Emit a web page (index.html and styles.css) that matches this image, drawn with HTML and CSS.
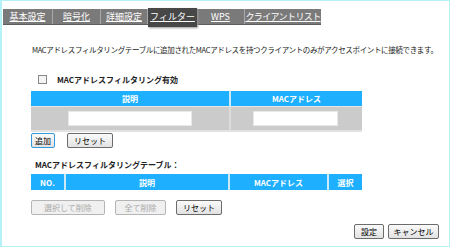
FILE: index.html
```html
<!DOCTYPE html>
<html>
<head>
    <title>フィルター</title>
    <link rel="stylesheet" href="styles.css">
</head>
<body>
<div class="frame">

    <div class="tabs">
        <a class="tab t1" href="#">基本設定</a>
        <a class="tab t2" href="#">暗号化</a>
        <a class="tab t3" href="#">詳細設定</a>
        <a class="tab t4 active" href="#">フィルター</a>
        <a class="tab t5" href="#">WPS</a>
        <a class="tab t6" href="#">クライアントリスト</a>
    </div>

    <div class="content">
        <p class="intro">MACアドレスフィルタリングテーブルに追加されたMACアドレスを持つクライアントのみがアクセスポイントに接続できます。</p>

        <label class="enable"><span class="check"></span>MACアドレスフィルタリング有効</label>

        <table class="grid add">
            <tr class="head">
                <td class="c-desc">説明</td>
                <td class="c-mac">MACアドレス</td>
            </tr>
            <tr class="entry">
                <td><input type="text" class="in-desc"></td>
                <td><input type="text" class="in-mac"></td>
            </tr>
        </table>
        <div class="btns">
            <button class="btn focus">追加</button>
            <button class="btn">リセット</button>
        </div>

        <h4>MACアドレスフィルタリングテーブル：</h4>
        <table class="grid list">
            <tr class="head">
                <td class="c-no">NO.</td>
                <td class="c-desc2">説明</td>
                <td class="c-mac2">MACアドレス</td>
                <td class="c-sel">選択</td>
            </tr>
        </table>
        <div class="btns row2">
            <button class="btn off w1" disabled>選択して削除</button>
            <button class="btn off w2" disabled>全て削除</button>
            <button class="btn">リセット</button>
        </div>
    </div>

    <div class="footer">
        <button class="btn">設定</button>
        <button class="btn wide">キャンセル</button>
    </div>

</div>
</body>
</html>
```

FILE: styles.css
```css
body {
    margin: 0;
    font-family: "Noto Sans CJK JP", "Liberation Sans", sans-serif;
    font-size: 8px;
    color: #000;
}
.frame {
    height: 245px;
    width: 447px;
    border: 1px solid #b4f2f8;
    border-left-width: 2px;
    background: #fff;
    overflow: hidden;
}
.tabs {
    display: flex;
    margin: 8px 0 0 1px;
    height: 15px;
    width: 318px;
    background: #7a7a7a;
    border-bottom: 1px solid #5e5e5e;
}
.tab {
    color: #fff;
    font-size: 9px;
    line-height: 15px;
    text-align: center;
    border-right: 1px solid #a8a8a8;
    box-sizing: border-box;
    white-space: nowrap;
}
.t1 { width: 50px; }
.t2 { width: 48px; }
.t3 { width: 47px; }
.t4 { width: 49px; }
.t5 { width: 48px; }
.t6 { width: 76px; border-right: none; letter-spacing: -0.6px; }
.tab.active {
    background: #474747;
    margin-top: -1px;
    height: 19px;
    line-height: 17px;
    border-right: none;
    box-shadow: 1px 1px 2px #999;
}
.content {
    margin-left: 29px;
}
.intro {
    margin: 19px 0 0 1px;
    font-size: 7.5px;
    letter-spacing: -0.35px;
    line-height: 12px;
    white-space: nowrap;
    color: #222;
}
.enable {
    display: flex;
    align-items: center;
    margin: 18px 0 0 7px;
    font-weight: bold;
    font-size: 8px;
    height: 10px;
    color: #222;
}
.check {
    width: 7px;
    height: 7px;
    border: 1px solid #888;
    background: #f4f4f4;
    margin-right: 10px;
}
.grid {
    border-collapse: collapse;
    width: 331px;
    margin-top: 7px;
}
.grid td {
    padding: 0;
    text-align: center;
}
.grid td + td {
    border-left: 2px solid #dcdcdc;
}
.head td {
    background: #1eafff;
    color: #fff;
    font-weight: bold;
    height: 15px;
    font-size: 8px;
    line-height: 15px;
    border-bottom: 1px solid #e6e6e6;
}
.head td + td {
    border-left: 2px solid #cde9f8;
}
.entry td {
    background: #cbcbcb;
    height: 23px;
    border-bottom: 2px solid #e2e2e2;
}
.c-desc { width: 198px; }
.in-desc, .in-mac {
    display: block;
    height: 15px;
    border: 1px solid #e8e8e8;
    background: #fff;
    box-sizing: border-box;
    padding: 0;
}
.in-desc { width: 124px; margin-left: 37px; }
.in-mac { width: 85px; margin-left: 22px; }
.btns {
    display: flex;
    gap: 12px;
    margin-top: 1px;
}
.btn {
    font-family: "Noto Sans CJK JP", sans-serif;
    font-size: 8px;
    height: 15px;
    padding: 0 6px;
    line-height: 12px;
    border: 1px solid #6c6c6c;
    border-radius: 2px;
    background: linear-gradient(#fafafa, #e2e2e2);
    color: #000;
    white-space: nowrap;
}
.btn.focus {
    border-color: #3399dd;
    padding: 0 3px;
}
.btn.off {
    color: #a9a9a9;
    border-color: #b5b5b5;
    background: #f0f0f0;
}
.w1 { width: 74px; }
.w2 { width: 51px; }
h4 {
    margin: 12px 0 0 4px;
    font-size: 8px;
    line-height: 10px;
    color: #222;
}
.list {
    margin-top: 4px;
}
.list .head td {
    height: 16px;
    border-bottom: none;
}
.c-no { width: 33px; }
.c-desc2 { width: 162px; }
.c-mac2 { width: 97px; }
.row2 {
    margin-top: 10px;
    gap: 10px;
}
.footer {
    display: flex;
    justify-content: flex-end;
    gap: 4px;
    margin: 9px 10px 0 0;
}
.wide { width: 51px; padding: 0 3px; }
```
